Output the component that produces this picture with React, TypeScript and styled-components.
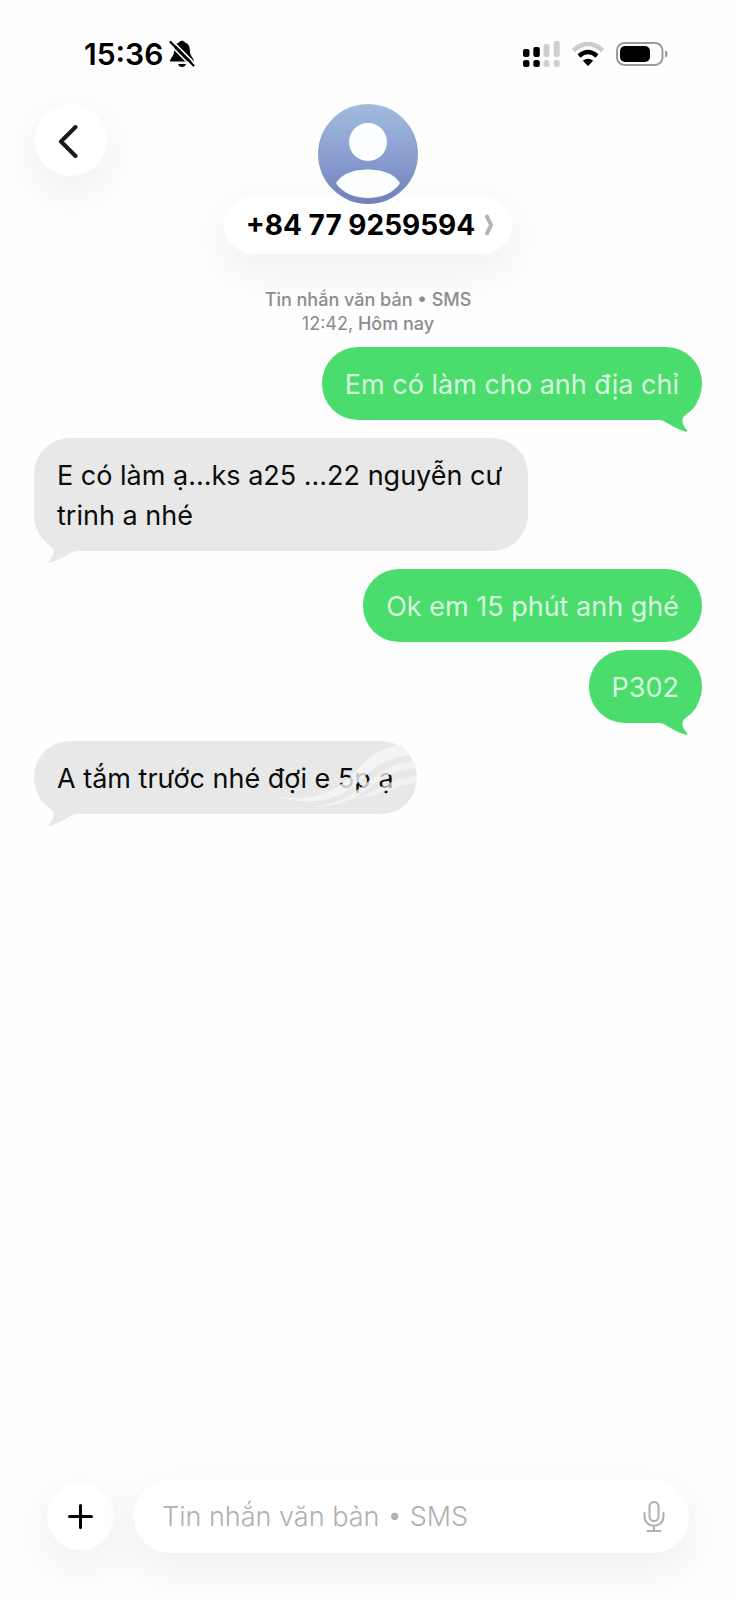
import React from "react";
import styled, { createGlobalStyle, css } from "styled-components";

const GlobalStyle = createGlobalStyle`
  *, *::before, *::after { box-sizing: border-box; }
  body {
    margin: 0;
    background: #fefefe;
    color: #000;
    font-family: Inter, "Liberation Sans", sans-serif;
  }
  button, input { font: inherit; color: inherit; border: 0; padding: 0; margin: 0; }
  button { cursor: pointer; }
`;

const floating = css`
  background: #fff;
  box-shadow: 0 14px 48px 4px rgba(0, 0, 0, 0.06);
`;

const Page = styled.div`
  min-height: 100vh;
  display: flex;
  flex-direction: column;
`;

const StatusBar = styled.div`
  display: flex;
  align-items: center;
  justify-content: space-between;
  padding: 35px 68px 0 84px;
`;

const Clock = styled.div`
  display: flex;
  align-items: center;
  gap: 6px;
  font-size: 30px;
  line-height: 38px;
  font-weight: 600;
`;

const StatusIcons = styled.div`
  display: flex;
  align-items: center;
  gap: 12px;
`;

const Header = styled.header`
  display: grid;
  grid-template-columns: 72px 1fr 72px;
  align-items: start;
  padding: 31px 35px 0;
`;

const RoundButton = styled.button<{ $size: number }>`
  ${floating}
  flex: none;
  display: flex;
  align-items: center;
  justify-content: center;
  width: ${(p) => p.$size}px;
  height: ${(p) => p.$size}px;
  border-radius: 50%;
`;

const Contact = styled.div`
  display: flex;
  flex-direction: column;
  align-items: center;
`;

const Avatar = styled.svg`
  position: relative;
  display: block;
  margin-bottom: -8px;
`;

const ContactPill = styled.button`
  ${floating}
  display: flex;
  align-items: center;
  gap: 10px;
  height: 58px;
  padding: 0 18px 0 22px;
  border-radius: 29px;
  font-size: 28px;
  line-height: 36px;
  font-weight: 700;
  white-space: nowrap;
`;

const Thread = styled.main`
  flex: 1;
  display: flex;
  flex-direction: column;
  padding: 34px 34px 40px;
`;

const Stamp = styled.p`
  margin: 0 0 11px;
  text-align: center;
  font-size: 18px;
  line-height: 24px;
  font-weight: 500;
  color: #8b8b8e;
`;

const StampTime = styled.time`
  font-weight: 400;
`;

const Messages = styled.ol`
  list-style: none;
  margin: 0;
  padding: 0;
  display: flex;
  flex-direction: column;
`;

const Bubble = styled.li<{ $sent?: boolean; $grouped?: boolean }>`
  position: relative;
  max-width: 494px;
  align-self: ${(p) => (p.$sent ? "flex-end" : "flex-start")};
  margin-bottom: ${(p) => (p.$grouped ? 8 : 18)}px;
  padding: 18px 23px 15px;
  border-radius: 36px;
  font-size: 27px;
  line-height: 40px;
  background: ${(p) => (p.$sent ? "#4adc6d" : "#e8e8e8")};
  color: ${(p) => (p.$sent ? "#d8f9de" : "#0c0c0c")};
`;

const TailShape = styled.svg<{ $sent?: boolean }>`
  position: absolute;
  bottom: -12px;
  ${(p) => (p.$sent ? "right: 0;" : "left: 0; transform: scaleX(-1);")}
  fill: ${(p) => (p.$sent ? "#4adc6d" : "#e8e8e8")};
`;

const Swoosh = styled.svg`
  position: absolute;
  right: 0;
  bottom: 0;
  pointer-events: none;
`;

const Composer = styled.form`
  display: flex;
  align-items: center;
  gap: 20px;
  padding: 0 47px 47px;
`;

const Field = styled.div`
  ${floating}
  flex: 1;
  min-width: 0;
  display: flex;
  align-items: center;
  height: 73px;
  padding: 0 18px 0 28px;
  border-radius: 36px;
`;

const TextInput = styled.input`
  flex: 1;
  min-width: 0;
  height: 40px;
  background: transparent;
  outline: none;
  font-size: 27px;
  font-weight: 300;
  &::placeholder { color: #b0b0b0; opacity: 1; }
`;

const MicButton = styled.button`
  display: flex;
  padding: 4px;
  background: transparent;
`;

const Tail = ({ sent }: { sent?: boolean }) => (
  <TailShape $sent={sent} width="48" height="40" viewBox="0 0 48 40" aria-hidden="true">
    <path d="M4 28C12 28 15 34 31 39.500Q34 40.500 33 38C29 33 27.500 30 29 26C31 22 38 20 43 11L24 6Z" />
  </TailShape>
);

const BellOff = () => (
  <svg width="26" height="28" viewBox="0 0 26 28" aria-hidden="true">
    <path d="M1 21.500C1 18 4.500 17 5 12C5 6 7 3.500 10 2.500C11 0 15 0 16 2.500C19 3.500 21 6 21 12C21.500 17 25 18 25 21.500Z" />
    <path d="M9 24H17Q16 27 13 27T9 24Z" />
    <path d="M3 0.500L27 24.500" stroke="#fefefe" strokeWidth="1.600" />
    <path d="M1.500 2L24.500 25.500" stroke="#000" strokeWidth="2.200" strokeLinecap="round" />
    <path d="M0 3.800L22.500 26.800" stroke="#fefefe" strokeWidth="1.600" />
  </svg>
);

const Signal = () => (
  <svg width="37" height="26" viewBox="0 0 37 26" aria-hidden="true">
    <g fill="#000">
      <rect x="0" y="8" width="6.500" height="8" rx="2" />
      <rect x="10.300" y="6" width="6.500" height="10" rx="2" />
      <rect x="0" y="19" width="6.500" height="7" rx="2.500" />
      <rect x="10.300" y="19" width="6.500" height="7" rx="2.500" />
    </g>
    <g fill="#cfcfcf">
      <rect x="20.500" y="3" width="6" height="13" rx="2" />
      <rect x="30.700" y="0" width="6" height="16" rx="2" />
      <rect x="20.500" y="19" width="6" height="7" rx="2.500" />
      <rect x="30.700" y="19" width="6" height="7" rx="2.500" />
    </g>
  </svg>
);

const Wifi = () => (
  <svg width="32" height="24" viewBox="0 0 32 24" fill="none" aria-hidden="true">
    <path d="M1.500 8.500Q16 -4.500 30.500 8.500" stroke="#cbcbcb" strokeWidth="4.500" />
    <path d="M7 14Q16 6 25 14" stroke="#000" strokeWidth="4.500" />
    <path d="M16 24L10.800 18.800Q16 14.800 21.200 18.800Z" fill="#000" />
  </svg>
);

const Battery = () => (
  <svg width="52" height="24" viewBox="0 0 52 24" aria-hidden="true">
    <rect x="1" y="1" width="45.500" height="22" rx="7.500" fill="none" stroke="#9a9a9a" strokeWidth="2" />
    <rect x="4" y="4" width="30" height="16" rx="5" />
    <path d="M49 8.500Q51.500 9 51.500 12T49 15.500Z" fill="#9a9a9a" />
  </svg>
);

const App = () => (
  <Page>
    <GlobalStyle />
    <StatusBar>
      <Clock>
        <span>15:36</span>
        <BellOff />
      </Clock>
      <StatusIcons>
        <Signal />
        <Wifi />
        <Battery />
      </StatusIcons>
    </StatusBar>

    <Header>
      <RoundButton $size={72} type="button" aria-label="Quay lại">
        <svg width="30" height="36" viewBox="0 0 30 36" fill="none" stroke="#1a1a1a" strokeWidth="4" strokeLinecap="round" strokeLinejoin="round" aria-hidden="true">
          <path d="M19.500 5L5 19.500L19.500 34" />
        </svg>
      </RoundButton>
      <Contact>
        <Avatar width="100" height="100" viewBox="0 0 100 100" aria-hidden="true">
          <defs>
            <linearGradient id="avatar" x1="0" y1="0" x2="0" y2="1">
              <stop offset="0" stopColor="#a2bbdf" />
              <stop offset="0.500" stopColor="#8b9fd1" />
              <stop offset="1" stopColor="#7280ba" />
            </linearGradient>
          </defs>
          <circle cx="50" cy="50" r="50" fill="url(#avatar)" />
          <circle cx="50" cy="38" r="19" fill="#fcfeff" />
          <path d="M18.500 78C25 69 37 65.500 50 65.500S75 69 81.500 78Q82 79 81.500 80C75 89 63 94 50 94S25 89 18.500 80Q18 79 18.500 78Z" fill="#fcfeff" />
        </Avatar>
        <ContactPill type="button">
          <span>+84 77 9259594</span>
          <svg width="9" height="22" viewBox="0 0 9 22" fill="none" stroke="#b4b4b6" strokeWidth="4" strokeLinecap="round" strokeLinejoin="round" aria-hidden="true">
            <path d="M2 2.500L6 11L2 19.500" />
          </svg>
        </ContactPill>
      </Contact>
    </Header>

    <Thread>
      <Stamp>
        Tin nhắn văn bản • SMS
        <br />
        <StampTime>12:42,</StampTime> Hôm nay
      </Stamp>
      <Messages>
        <Bubble $sent>
          Em có làm cho anh địa chỉ
          <Tail sent />
        </Bubble>
        <Bubble>
          E có làm ạ...ks a25 ...22 nguyễn cư trinh a nhé
          <Tail />
        </Bubble>
        <Bubble $sent $grouped>
          Ok em 15 phút anh ghé
        </Bubble>
        <Bubble $sent>
          P302
          <Tail sent />
        </Bubble>
        <Bubble>
          A tắm trước nhé đợi e 5p ạ
          <Tail />
          <Swoosh width="150" height="73" viewBox="0 0 150 73" fill="#f6f6f6" aria-hidden="true">
            <path d="M6 55C50 62 70 50 88 31C102 15 116 5 134 4L144 14C122 16 107 26 94 39C73 58 48 67 6 55Z" opacity="0.800" />
            <path d="M46 66C76 62 90 50 104 38C118 27 132 21 147 20L150 27C132 28 118 35 106 44C90 57 72 66 46 66Z" opacity="0.750" />
            <path d="M84 58C106 54 118 38 150 35V42C128 44 112 56 84 58Z" opacity="0.650" />
          </Swoosh>
        </Bubble>
      </Messages>
    </Thread>

    <Composer onSubmit={(e: React.FormEvent) => e.preventDefault()}>
      <RoundButton $size={67} type="button" aria-label="Thêm">
        <svg width="26" height="26" viewBox="0 0 26 26" stroke="#000" strokeWidth="3" strokeLinecap="round" aria-hidden="true">
          <path d="M12.500 1.500V23.500M1.500 12.500H23.500" />
        </svg>
      </RoundButton>
      <Field>
        <TextInput type="text" aria-label="Tin nhắn" placeholder="Tin nhắn văn bản • SMS" />
        <MicButton type="button" aria-label="Ghi âm">
          <svg width="26" height="32" viewBox="0 0 26 32" fill="none" stroke="#b0b0b0" strokeWidth="2" strokeLinecap="round" aria-hidden="true">
            <rect x="8.500" y="1" width="9" height="19" rx="4.500" />
            <path d="M3.500 12V15C3.500 28 22.500 28 22.500 15V12M13 25V30M6.500 30H19.500" />
          </svg>
        </MicButton>
      </Field>
    </Composer>
  </Page>
);

export default App;
